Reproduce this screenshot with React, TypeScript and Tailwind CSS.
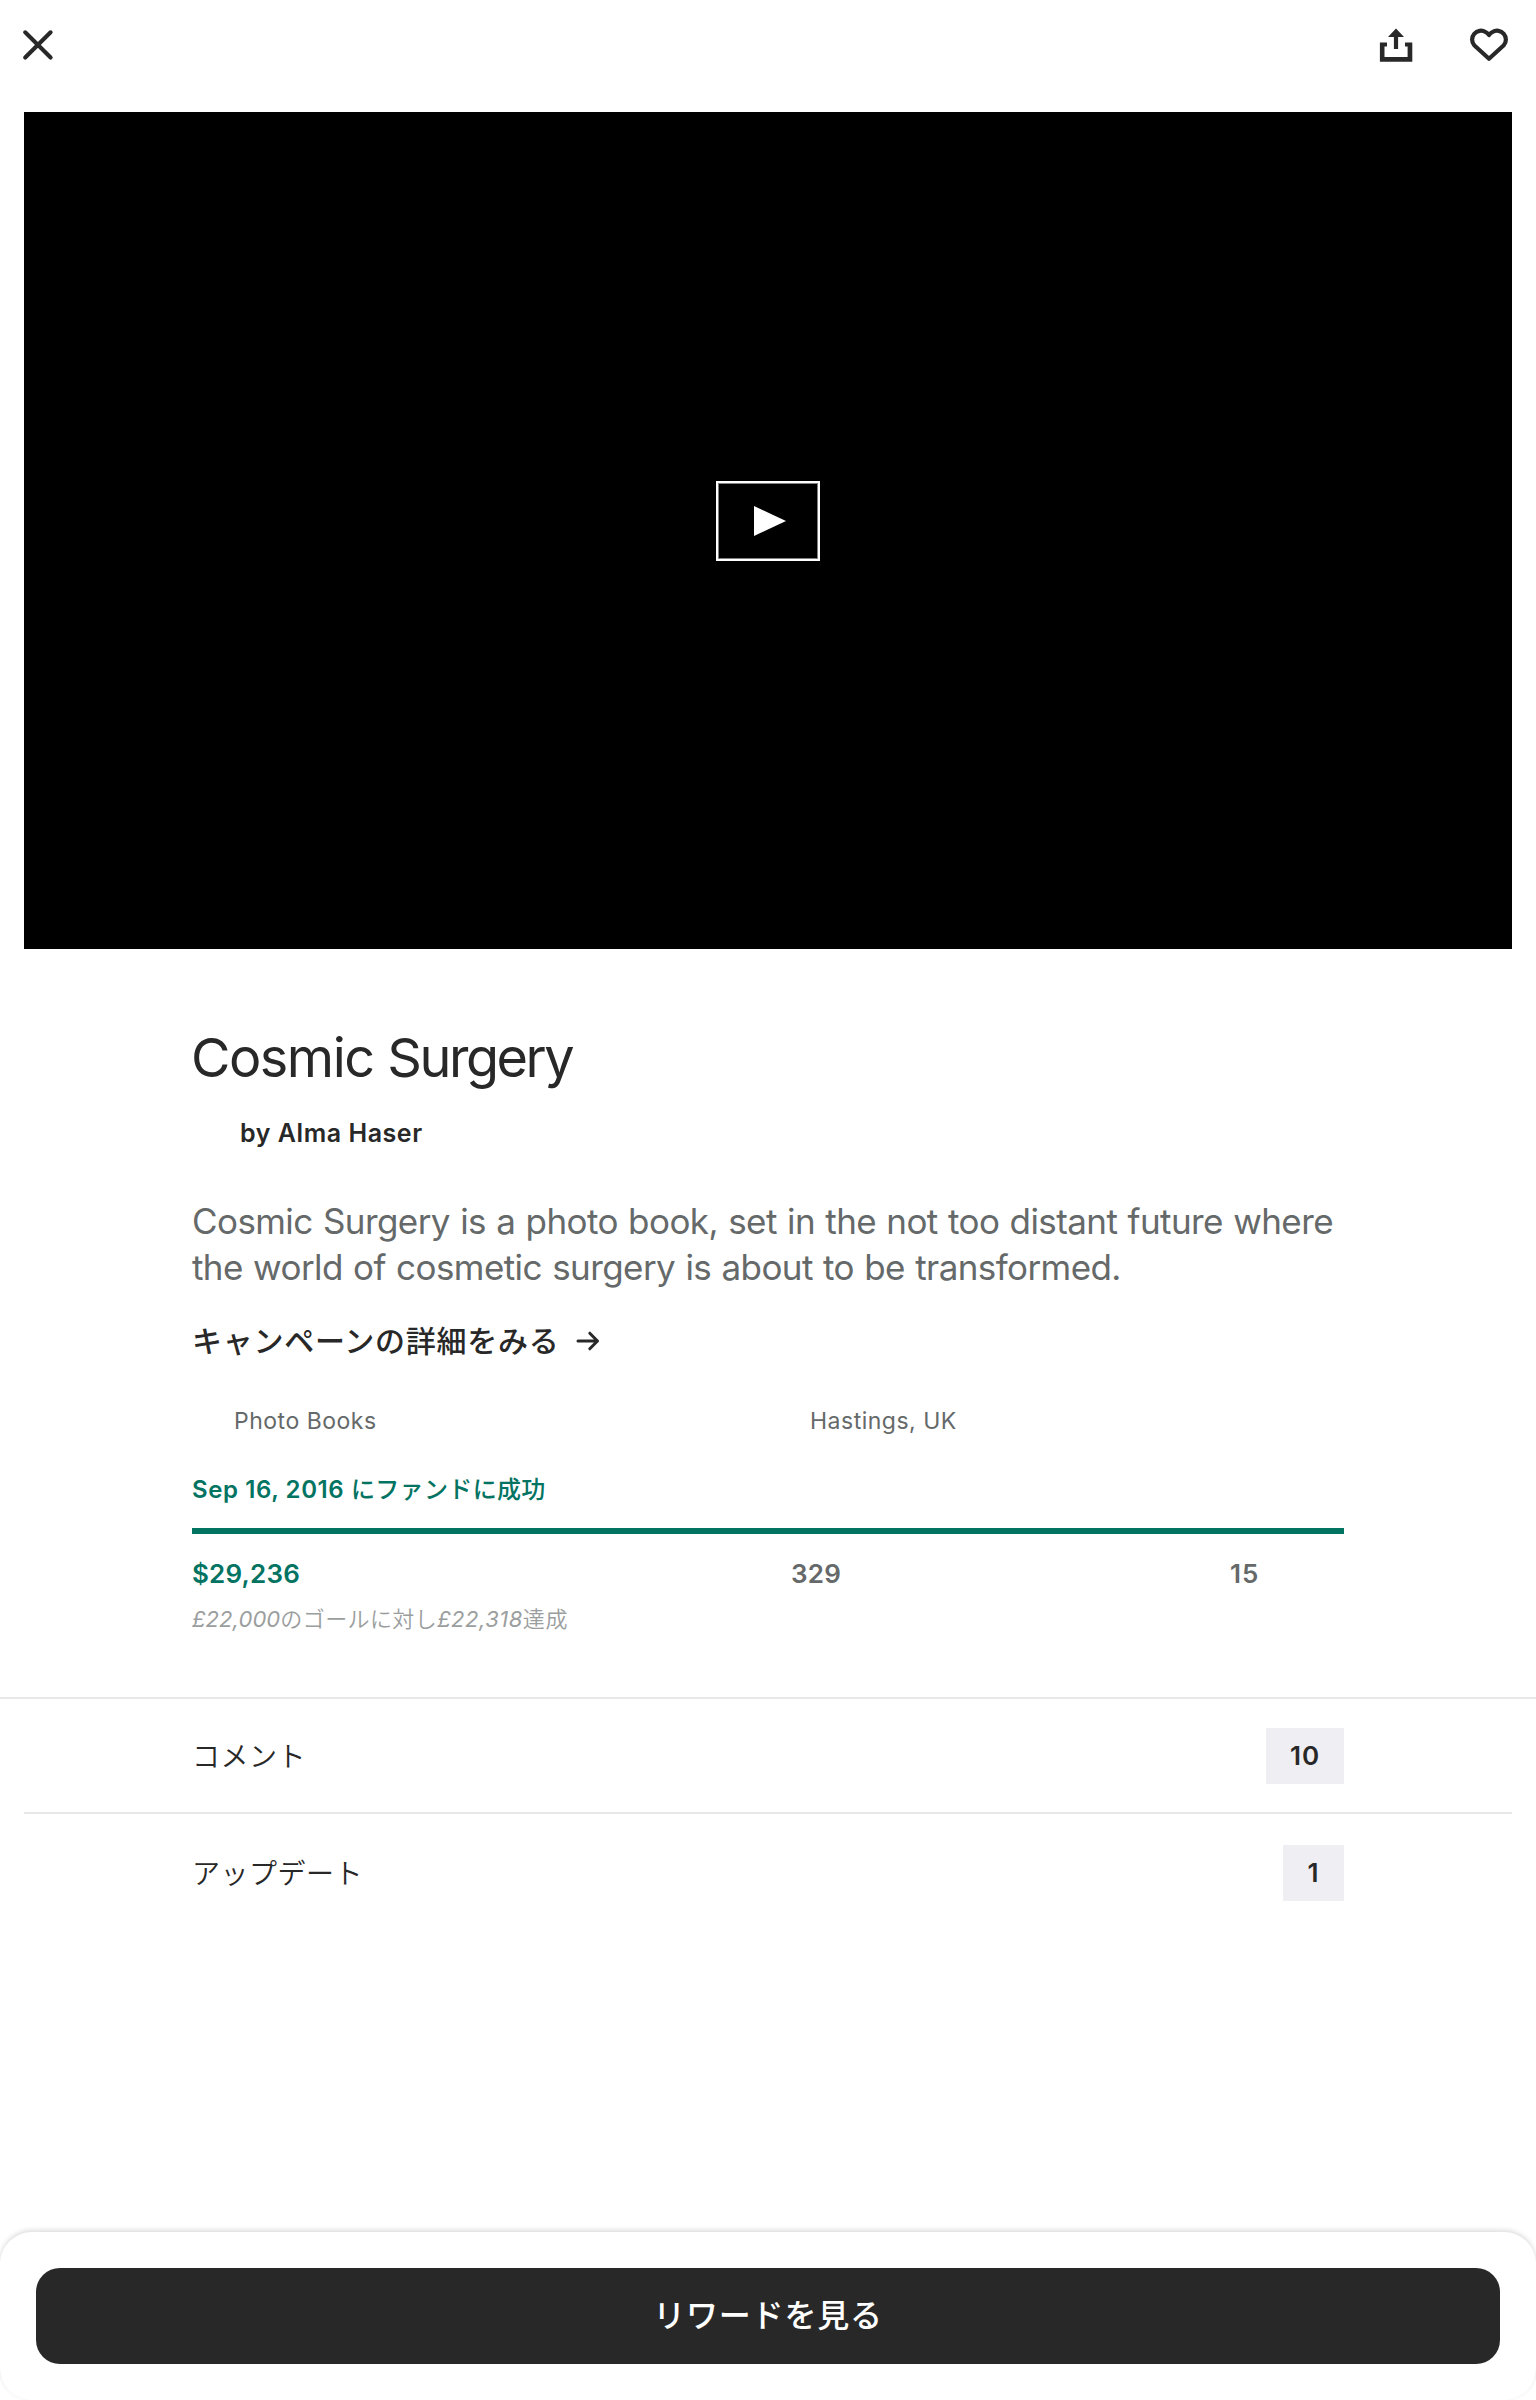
import React from "react";

function CloseIcon() {
  return (
    <svg width="36" height="36" viewBox="0 0 36 36" fill="none" stroke="#282828" strokeWidth="4.1" strokeLinecap="round">
      <path d="M5.2 5.3 30.6 30.5M30.6 5.3 5.2 30.5" />
    </svg>
  );
}

function ShareIcon() {
  return (
    <svg width="36" height="36" viewBox="0 0 36 36" fill="#282828">
      <path d="M18 1.4 26 10H20.1V22H15.9V10H10Z" />
      <path d="M1.9 15.4H9V19.6H6.5V30H29.6V19.6H27V15.4H34.3V34.7H1.9Z" />
    </svg>
  );
}

function HeartIcon() {
  return (
    <svg width="42" height="36" viewBox="0 0 42 36" fill="none" stroke="#282828" strokeWidth="4.2" strokeLinejoin="round">
      <path d="M21 31.7 6.2 18.2A8.8 8.8 0 0 1 17.5 5Q19.6 6.2 21 8 22.4 6.2 24.5 5A8.8 8.8 0 0 1 35.8 18.2Z" />
    </svg>
  );
}

function ArrowIcon() {
  return (
    <svg width="24" height="20" viewBox="0 0 24 20" fill="none" stroke="#282828" strokeWidth="3" strokeLinecap="round" strokeLinejoin="round">
      <path d="M2 10H21.5M13.8 2.2 21.5 10 13.8 17.8" />
    </svg>
  );
}

function CountRow({ label, count }: { label: string; count: number }) {
  return (
    <div className="flex items-center justify-between px-[168px]">
      <span className="pt-px text-[28px] leading-[56px] font-[350] tracking-[0.5px]">{label}</span>
      <span className="-mt-px h-14 min-w-[61px] bg-[#efeef3] px-6 text-center text-[26px] leading-[56px] font-semibold tracking-[0.9px]">
        {count}
      </span>
    </div>
  );
}

export default function App() {
  return (
    <div className="flex h-[2400px] w-[1536px] flex-col overflow-hidden bg-white font-['Inter','Noto_Sans_CJK_JP',sans-serif] text-[#282828]">
      <header className="flex h-28 shrink-0 items-start justify-between pt-[27px] pr-[26px] pl-5">
        <button aria-label="Close">
          <CloseIcon />
        </button>
        <div className="flex gap-[54px]">
          <button aria-label="Share">
            <ShareIcon />
          </button>
          <button aria-label="Save">
            <HeartIcon />
          </button>
        </div>
      </header>

      <div className="mx-6 flex h-[837px] shrink-0 items-center justify-center bg-black pb-[19px]">
        <button
          aria-label="Play"
          className="flex h-20 w-[104px] items-center justify-center border-2 border-white pl-[4px] shadow-[inset_0_0_0_1px_rgba(255,255,255,0.5)]"
        >
          <svg width="32" height="30" viewBox="0 0 32 30" fill="#fff">
            <path d="M0 0 32 15 0 30Z" />
          </svg>
        </button>
      </div>

      <main className="flex flex-col px-48 pt-[77px]">
        <h1 className="-ml-px text-[54px] leading-[64px] tracking-[-1.5px]">
          Cosmic <span className="tracking-[-2.45px]">Surgery</span>
        </h1>
        <p className="mt-7 pl-12 text-[25px] leading-[30px] font-semibold tracking-[0.55px]">by Alma Haser</p>
        <p className="mt-[50px] text-[35px] leading-[46px] tracking-[-0.58px] [word-spacing:1px] whitespace-nowrap text-[#656969]">
          Cosmic Surgery is a photo book, set in the not too distant future where
          <br />
          the world of cosmetic surgery is about to be transformed.
        </p>
        <a className="mt-7 flex items-center text-[30px] leading-[46px] font-medium">
          <span className="w-[384px] tracking-[0.74px]">キャンペーンの詳細をみる</span>
          <ArrowIcon />
        </a>
        <div className="mt-[43px] grid grid-cols-2 text-[23px] leading-7 tracking-[0.5px] text-[#656969]">
          <span className="pl-[42px]">Photo Books</span>
          <span className="pl-[42px]">Hastings, UK</span>
        </div>
        <p className="mt-[41px] text-[24px] leading-7 font-semibold tracking-[0.6px] text-[#037362]">
          Sep 16, 2016 <span className="font-medium tracking-[0.35px]">にファンドに成功</span>
        </p>
        <div className="mt-6 h-1.5 bg-[#037362]" />
        <div className="mt-6 flex text-[26px] leading-8 font-semibold tracking-[0.2px] text-[#656969]">
          <span className="w-[599px] text-[#037362]">$29,236</span>
          <span className="w-[439px]">329</span>
          <span className="tracking-[1px]">15</span>
        </div>
        <p className="mt-[15px] text-[22px] leading-7 font-[350] text-[#9b9e9e]">
          <em className="font-normal tracking-[0.1px]">£22,000</em>
          <span className="tracking-[0.4px]">のゴールに対し</span>
          <em className="font-normal tracking-[0.5px]">£22,318</em>
          <span className="tracking-[0.6px]">達成</span>
        </p>
      </main>

      <section className="mt-16 flex flex-col border-t-2 border-[#e8e8e8] pt-[29px]">
        <div className="mx-6 border-b-2 border-[#e8e8e8] pb-[27px]">
          <CountRow label="コメント" count={10} />
        </div>
        <div className="mx-6 pt-[31px]">
          <CountRow label="アップデート" count={1} />
        </div>
      </section>

      <footer className="mt-auto h-[168px] shrink-0 rounded-[32px] bg-white px-9 pt-9 shadow-[0_-2px_5px_rgba(0,0,0,0.14)]">
        <button className="h-24 w-full rounded-3xl bg-[#282828] text-[32px] leading-[92px] font-medium tracking-[0.8px] text-white">
          リワードを見る
        </button>
      </footer>
    </div>
  );
}
